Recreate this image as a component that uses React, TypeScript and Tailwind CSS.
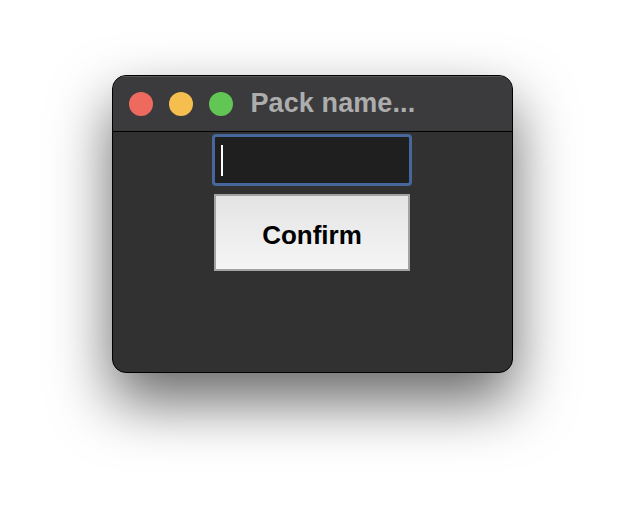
import React from "react";

const App: React.FC = () => {
  return (
    <div className="w-[624px] h-[520px] bg-white flex justify-center pt-[75px] font-['Liberation_Sans',Arial,sans-serif]">
      <div className="w-[401px] h-[298px] flex flex-col rounded-[14px] border border-black bg-[#313131] shadow-[0_28px_60px_rgba(0,0,0,0.6)] overflow-hidden">
        {/* Title bar */}
        <div className="h-[56px] shrink-0 flex items-center gap-[18px] pl-4 bg-[#3b3b3d] border-b border-black shadow-[inset_0_1px_0_rgba(255,255,255,0.15)]">
          <div className="flex items-center gap-4">
            <span className="w-6 h-6 rounded-full bg-[#ee6a5f]" />
            <span className="w-6 h-6 rounded-full bg-[#f5be4f]" />
            <span className="w-6 h-6 rounded-full bg-[#62c655]" />
          </div>
          <span className="text-[27px] font-bold text-[#adadad] leading-none tracking-[0.1px]">Pack name...</span>
        </div>

        {/* Content */}
        <div className="flex flex-col items-center pt-[2px] gap-2">
          <div className="w-[200px] h-[52px] rounded-[4px] border-[3px] border-[#45679b] bg-[#1f1f1f] flex items-center pl-[6px]">
            <span className="w-[2px] h-[31px] bg-white" />
          </div>
          <button className="w-[196px] h-[77px] pt-[5px] border-2 border-[#a3a3a3] bg-gradient-to-b from-[#e4e4e4] to-[#f5f5f5] text-black text-[26px] font-bold">
            Confirm
          </button>
        </div>
      </div>
    </div>
  );
};

export default App;
